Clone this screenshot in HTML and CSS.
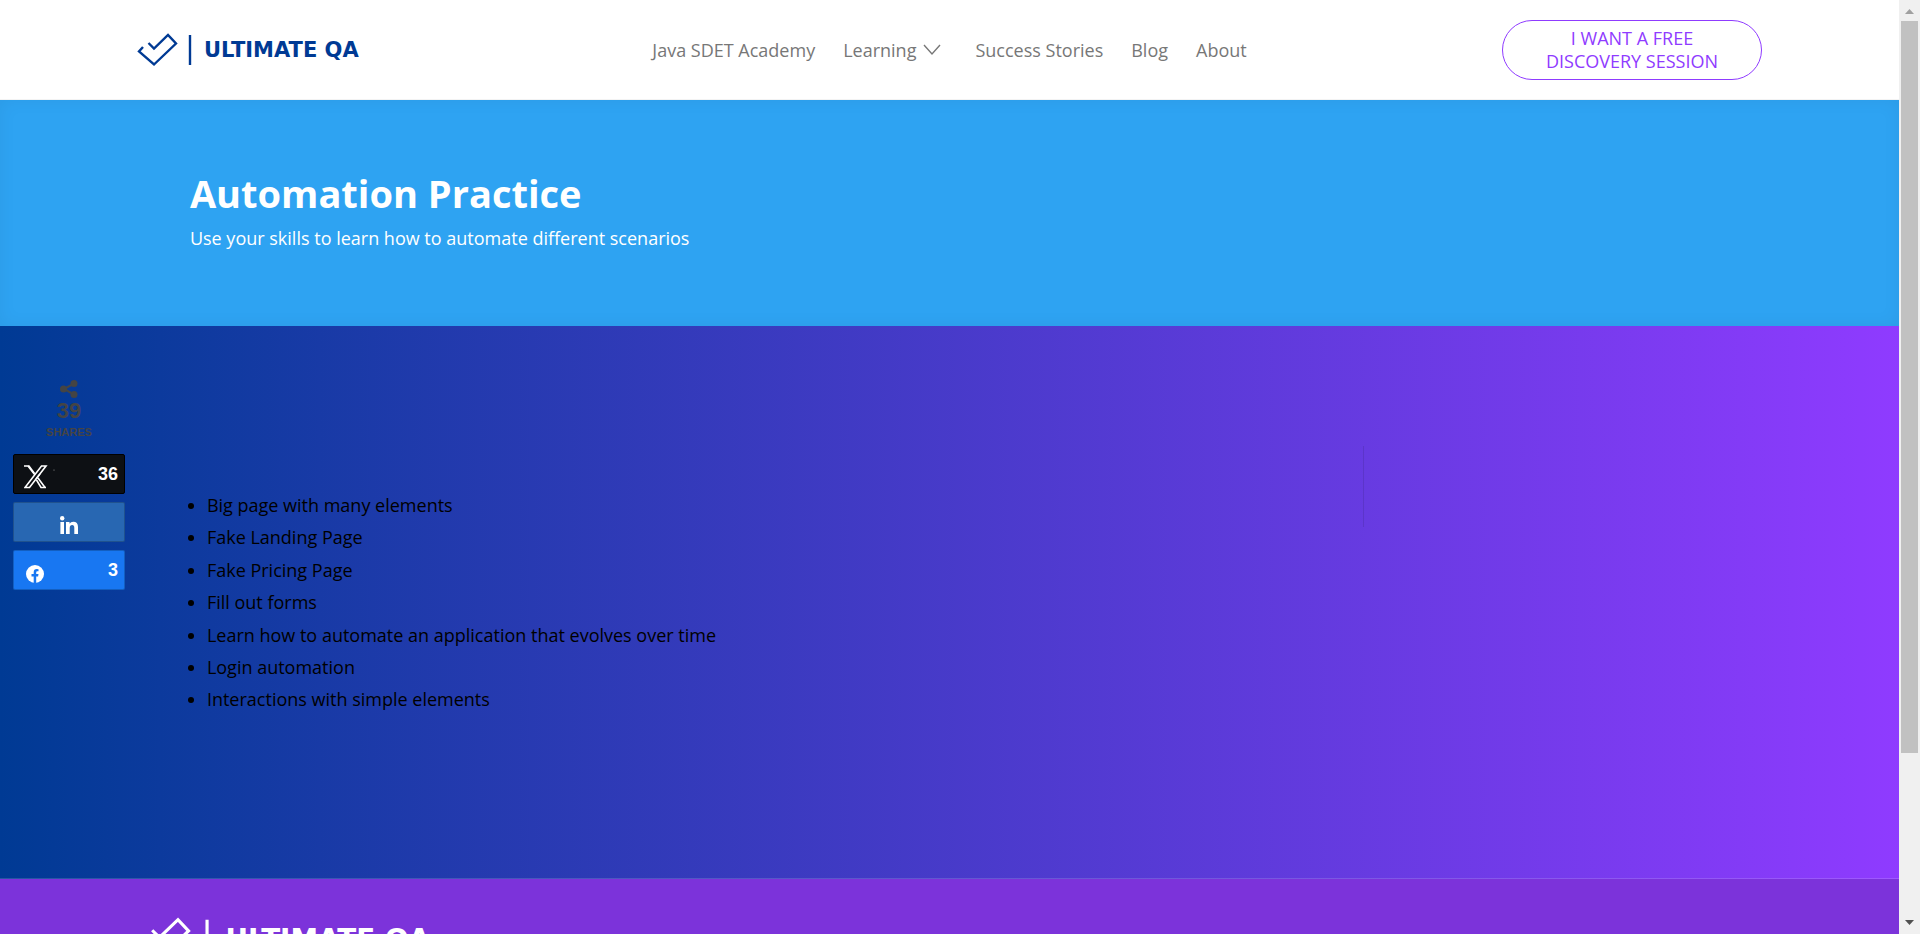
FILE: index.html
```html
<!DOCTYPE html>
<html lang="en">
<head>
<meta charset="utf-8">
<title>Automation Practice - Ultimate QA</title>
<link rel="stylesheet" href="styles.css">
</head>
<body>
<div class="page">
  <header class="header">
    <a class="logo" href="#" aria-label="Ultimate QA">
      <svg class="logo-art" viewBox="0 0 230 34">
        <path class="logo-line" d="M6 14L2 18.500L17 31.500L39 10.500L31 2L17 15.500L11.500 10M53 2V32"/>
        <text class="logo-text" x="67" y="24">ULTIMATE QA</text>
      </svg>
    </a>
    <nav class="nav">
      <a href="#">Java SDET Academy</a>
      <a class="has-menu" href="#">Learning
        <svg class="chevron" viewBox="0 0 18 12"><path d="M1 1L9 10L17 1"/></svg>
      </a>
      <a href="#">Success Stories</a>
      <a href="#">Blog</a>
      <a href="#">About</a>
    </nav>
    <a class="cta" href="#">I WANT A FREE<br>DISCOVERY SESSION</a>
  </header>
  <section class="hero">
    <h1>Automation Practice</h1>
    <p>Use your skills to learn how to automate different scenarios</p>
  </section>
  <main class="content">
    <ul class="links">
      <li><a href="#">Big page with many elements</a></li>
      <li><a href="#">Fake Landing Page</a></li>
      <li><a href="#">Fake Pricing Page</a></li>
      <li><a href="#">Fill out forms</a></li>
      <li><a href="#">Learn how to automate an application that evolves over time</a></li>
      <li><a href="#">Login automation</a></li>
      <li><a href="#">Interactions with simple elements</a></li>
    </ul>
    <div class="divider"></div>
  </main>
  <footer class="footer">
    <svg class="footer-logo" viewBox="0 0 230 34" role="img" aria-label="Ultimate QA">
      <path class="logo-line" d="M6 14L2 18.500L17 31.500L39 10.500L31 2L17 15.500L11.500 10M53 2V32"/>
      <text class="logo-text" x="67" y="24">ULTIMATE QA</text>
    </svg>
  </footer>
  <aside class="share" aria-label="Share">
    <div class="share-total">
      <svg class="share-icon" viewBox="0 0 18 18"><path d="M14 3.500L4 9L14 14.500"/><circle cx="14" cy="3.500" r="3.500"/><circle cx="3.500" cy="9" r="3.500"/><circle cx="14" cy="14.500" r="3.500"/></svg>
      <span class="share-count">39</span>
      <span class="share-label">SHARES</span>
    </div>
    <a class="share-button x" href="#" aria-label="Share on X">
      <svg class="x-icon" viewBox="0 0 32 24"><path d="M0 1H5L10.500 8.500M12.500 15L17 22.500H22M12 14L16 9"/><path class="x-stroke" d="M17.500 1H22L5.500 22.500H1ZM4 1L11 10M14 13L21 22.500"/><circle class="x-dot" cx="30" cy="5" r=".6"/></svg>
      <span>36</span>
    </a>
    <a class="share-button linkedin" href="#" aria-label="Share on LinkedIn">
      <svg class="in-icon" viewBox="0 0 18 18"><circle cx="2.200" cy="2.200" r="2.200"/><path d="M.400 6H4V18H.400ZM6 6H9.500V7.700Q10.700 5.700 13.200 5.700Q18 5.700 18 11V18H14.300V11.800Q14.300 9 12.200 9Q9.700 9 9.700 12V18H6Z"/></svg>
    </a>
    <a class="share-button facebook" href="#" aria-label="Share on Facebook">
      <svg class="fb-icon" viewBox="0 0 18 18"><circle cx="9" cy="9" r="9"/><path d="M7.700 18V11.500H5.500V9H7.700V7.200Q7.700 4 10.800 4Q11.800 4 12.500 4.200V6.300H11.300Q10.200 6.300 10.200 7.400V9H12.500L12.100 11.500H10.200V18Z"/></svg>
      <span>3</span>
    </a>
  </aside>
</div>
<div class="scrollbar" aria-hidden="true">
  <svg class="arrow up" viewBox="0 0 9 5"><path d="M0 5L4.500 0L9 5Z"/></svg>
  <div class="track"><div class="thumb"></div></div>
  <svg class="arrow down" viewBox="0 0 9 5"><path d="M0 0H9L4.500 5Z"/></svg>
</div>
</body>
</html>
```

FILE: styles.css
```css
* { box-sizing: border-box; }

body {
  margin: 0;
  height: 100vh;
  display: grid;
  grid-template-columns: 1fr 21px;
  overflow: hidden;
  font-family: "Open Sans", "Liberation Sans", sans-serif;
  font-size: 18px;
  font-weight: 400;
}

a { color: inherit; text-decoration: none; }
svg { display: block; }

.page { position: relative; height: 100vh; overflow: hidden; }

.header {
  display: grid;
  grid-template-columns: 1fr auto 1fr;
  align-items: center;
  min-height: 100px;
  padding: 0 137px;
  background: #fff;
  border-bottom: 1px solid #f3f3f3;
}

.logo { justify-self: start; color: #003a94; }
.logo-art { width: 230px; height: 34px; }
.logo-line { fill: none; stroke: currentColor; stroke-width: 2.4; }
.logo-text { fill: currentColor; font-family: "DejaVu Sans", sans-serif; font-size: 21px; font-weight: 700; }

.nav { display: flex; gap: 28px; color: #777; font-weight: 500; line-height: 24px; }
.has-menu { display: flex; align-items: center; gap: 7px; padding-right: 6px; }
.chevron { width: 18px; height: 12px; fill: none; stroke: currentColor; stroke-width: 1.4; }

.cta {
  justify-self: end;
  width: 260px;
  padding: 6px 16px;
  border: 1px solid #8f3bff;
  border-radius: 30px;
  color: #8f3bff;
  font-weight: 500;
  line-height: 23px;
  text-align: center;
}

.hero {
  padding: 73px 10% 73px;
  background: #2ea3f2;
  box-shadow: inset 0 0 18px rgba(0, 0, 0, 0.05);
  color: #fff;
}
.hero h1 { margin: 0; font-size: 38px; font-weight: 700; line-height: 40px; }
.hero p { margin: 10px 0 0; font-weight: 500; line-height: 30px; }

.content {
  display: flex;
  justify-content: space-between;
  align-items: flex-start;
  padding: 120px 10% 119px;
  background: linear-gradient(90deg, #003a94 0%, #8f3bff 100%);
  border-bottom: 1px solid rgba(255, 255, 255, 0.15);
}
.links { margin: 43px 0; padding: 0 0 0 17px; color: #000; line-height: 1.8; }
.divider { width: 346px; height: 81px; border-left: 1px solid rgba(0, 0, 0, 0.1); }

.footer { padding: 38px 137px; background: #7c33da; color: #fff; }
.footer-logo { width: 304px; height: 45px; }

.share {
  position: absolute;
  top: 380px;
  left: 13px;
  width: 112px;
  display: flex;
  flex-direction: column;
  gap: 8px;
  font-family: "Liberation Sans", Arial, sans-serif;
}
.share-total { display: flex; flex-direction: column; align-items: center; height: 66px; color: #444; font-weight: 700; }
.share-icon { width: 18px; height: 18px; fill: currentColor; stroke: currentColor; }
.share-icon path { fill: none; stroke-width: 2; }
.share-icon circle { stroke: none; }
.share-count { font-size: 22px; line-height: 26px; }
.share-label { font-size: 11px; line-height: 16px; }
.share-button {
  display: flex;
  align-items: center;
  justify-content: space-between;
  height: 40px;
  padding: 0 6px 0 10px;
  border: 1px solid rgba(0, 0, 0, 0.2);
  border-radius: 2px;
  color: #fff;
  font-size: 18px;
  font-weight: 700;
}
.x { background: #0d1014; border-color: #000; }
.linkedin { justify-content: center; padding: 4px 0 0; background: #2867b2; }
.facebook { background: #1877f2; }
.x-icon { width: 32px; height: 24px; margin-top: 6px; fill: none; stroke: #fff; stroke-width: 1.6; }
.x-stroke { fill: none; stroke-width: 1.6; }
.x-dot { fill: #999; stroke: none; }
.in-icon { width: 18px; height: 18px; margin-top: 2px; fill: #fff; }
.fb-icon { width: 18px; height: 18px; margin: 8px 0 0 2px; fill: #fff; }
.fb-icon path { fill: #1877f2; }

.scrollbar { display: flex; flex-direction: column; align-items: center; background: #f0f0f0; }
.arrow { width: 9px; height: 5px; flex: none; }
.up { margin: 9px 0 7px; fill: #a0a0a0; }
.down { margin: 6px 0 9px; fill: #505050; }
.track { flex: 1; width: 17px; }
.thumb { height: 82%; background: #c1c1c1; }
```
